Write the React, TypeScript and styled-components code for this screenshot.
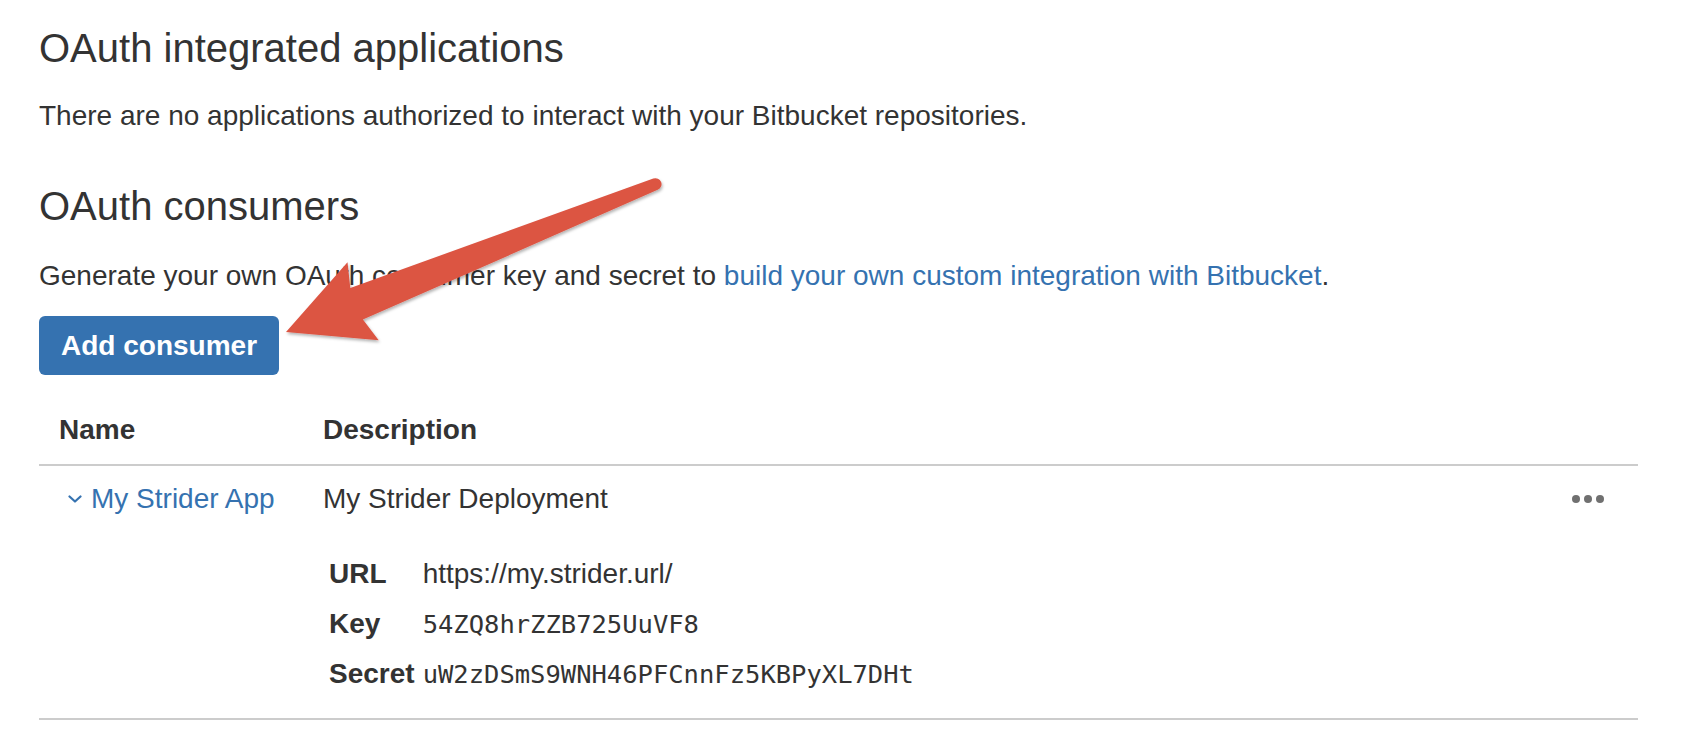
import React from "react";
import styled, { createGlobalStyle } from "styled-components";

const GlobalStyle = createGlobalStyle`
  html, body {
    margin: 0;
    padding: 0;
    background: #ffffff;
  }
  body {
    font-family: "Liberation Sans", Arial, Helvetica, sans-serif;
    font-size: 28px;
    color: #333333;
  }
`;

const Page = styled.div`
  position: relative;
  padding: 24px 54px 0 39px;
`;

const Heading = styled.h2`
  margin: 0;
  font-size: 40px;
  line-height: 48px;
  font-weight: 400;
  color: #333333;
`;

const Paragraph = styled.p<{ $gap: number }>`
  margin: ${(p) => p.$gap}px 0 0;
  font-size: 28px;
  line-height: 40px;
`;

const SectionHeading = styled(Heading)`
  margin-top: 46px;
`;

const Link = styled.a`
  color: #3572b0;
  text-decoration: none;
`;

const PrimaryButton = styled.button`
  display: block;
  margin-top: 20px;
  height: 59px;
  padding: 0 22px;
  border: none;
  border-radius: 6px;
  background: #3572b0;
  color: #ffffff;
  font-family: "Liberation Sans", Arial, Helvetica, sans-serif;
  font-size: 28px;
  font-weight: 700;
  line-height: 59px;
  cursor: pointer;
`;

const Table = styled.div`
  margin-top: 20px;
`;

const TableRow = styled.div<{ $header?: boolean }>`
  display: grid;
  grid-template-columns: 264px 1fr auto;
  border-bottom: 2px solid #cccccc;
  padding: ${(p) => (p.$header ? "15px 0 14px" : "13px 0 19px")};
`;

const HeaderCell = styled.div`
  padding: 0 20px;
  font-weight: 700;
  line-height: 40px;
`;

const Cell = styled.div`
  padding: 0 20px;
  line-height: 40px;
`;

const Chevron = styled.svg`
  display: inline-block;
  width: 14px;
  height: 8px;
  margin: 0 9px;
  vertical-align: 5px;
`;

const Details = styled.dl`
  display: grid;
  grid-template-columns: auto 1fr;
  column-gap: 8px;
  align-items: baseline;
  margin: 30px 0 0 6px;
`;

const Term = styled.dt`
  font-weight: 700;
  line-height: 50px;
`;

const Value = styled.dd<{ $mono?: boolean }>`
  margin: 0;
  line-height: 50px;
  font-family: ${(p) =>
    p.$mono
      ? '"DejaVu Sans Mono", "Liberation Mono", monospace'
      : '"Liberation Sans", Arial, sans-serif'};
  font-size: ${(p) => (p.$mono ? "25.5px" : "28px")};
`;

const ActionsCell = styled.div`
  padding: 0 34px 0 20px;
  display: flex;
  align-items: center;
  height: 40px;
`;

const MoreButton = styled.svg`
  width: 32px;
  height: 8px;
  display: block;
`;

const Annotation = styled.svg`
  position: absolute;
  left: 0;
  top: 0;
  width: 1692px;
  height: 754px;
  pointer-events: none;
  overflow: visible;
`;

export default function App() {
  return (
    <>
      <GlobalStyle />
      <Page>
        <Heading>OAuth integrated applications</Heading>
        <Paragraph $gap={24}>
          There are no applications authorized to interact with your Bitbucket
          repositories.
        </Paragraph>

        <SectionHeading>OAuth consumers</SectionHeading>
        <Paragraph $gap={26}>
          Generate your own OAuth consumer key and secret to{" "}
          <Link href="#">build your own custom integration with Bitbucket</Link>.
        </Paragraph>

        <PrimaryButton>Add consumer</PrimaryButton>

        <Table>
          <TableRow $header>
            <HeaderCell>Name</HeaderCell>
            <HeaderCell>Description</HeaderCell>
            <HeaderCell />
          </TableRow>
          <TableRow>
            <Cell>
              <Link href="#">
                <Chevron viewBox="0 0 14 8">
                  <path
                    d="M1.5 1.5 L7 6.5 L12.5 1.5"
                    fill="none"
                    stroke="#3572b0"
                    strokeWidth="2.2"
                    strokeLinecap="round"
                    strokeLinejoin="round"
                  />
                </Chevron>
                My Strider App
              </Link>
            </Cell>
            <Cell>
              My Strider Deployment
              <Details>
                <Term>URL</Term>
                <Value>https://my.strider.url/</Value>
                <Term>Key</Term>
                <Value $mono>54ZQ8hrZZB725UuVF8</Value>
                <Term>Secret</Term>
                <Value $mono>uW2zDSmS9WNH46PFCnnFz5KBPyXL7DHt</Value>
              </Details>
            </Cell>
            <ActionsCell>
              <MoreButton viewBox="0 0 32 8">
                <circle cx="4" cy="4" r="4" fill="#707070" />
                <circle cx="16" cy="4" r="4" fill="#707070" />
                <circle cx="28" cy="4" r="4" fill="#707070" />
              </MoreButton>
            </ActionsCell>
          </TableRow>
        </Table>

        <Annotation viewBox="0 0 1692 754">
          <defs>
            <filter id="arrowShadow" x="-10%" y="-10%" width="130%" height="140%">
              <feDropShadow dx="1" dy="2" stdDeviation="1.5" floodColor="#000" floodOpacity="0.3" />
            </filter>
          </defs>
          <path
            d="M286 332 L347.5 262.2 L350.3 288 L653.3 178.6 A6 6 0 0 1 657.7 189.8 L362.9 319.6 L378.7 340.2 Z"
            fill="#dc5443"
            filter="url(#arrowShadow)"
          />
        </Annotation>
      </Page>
    </>
  );
}
